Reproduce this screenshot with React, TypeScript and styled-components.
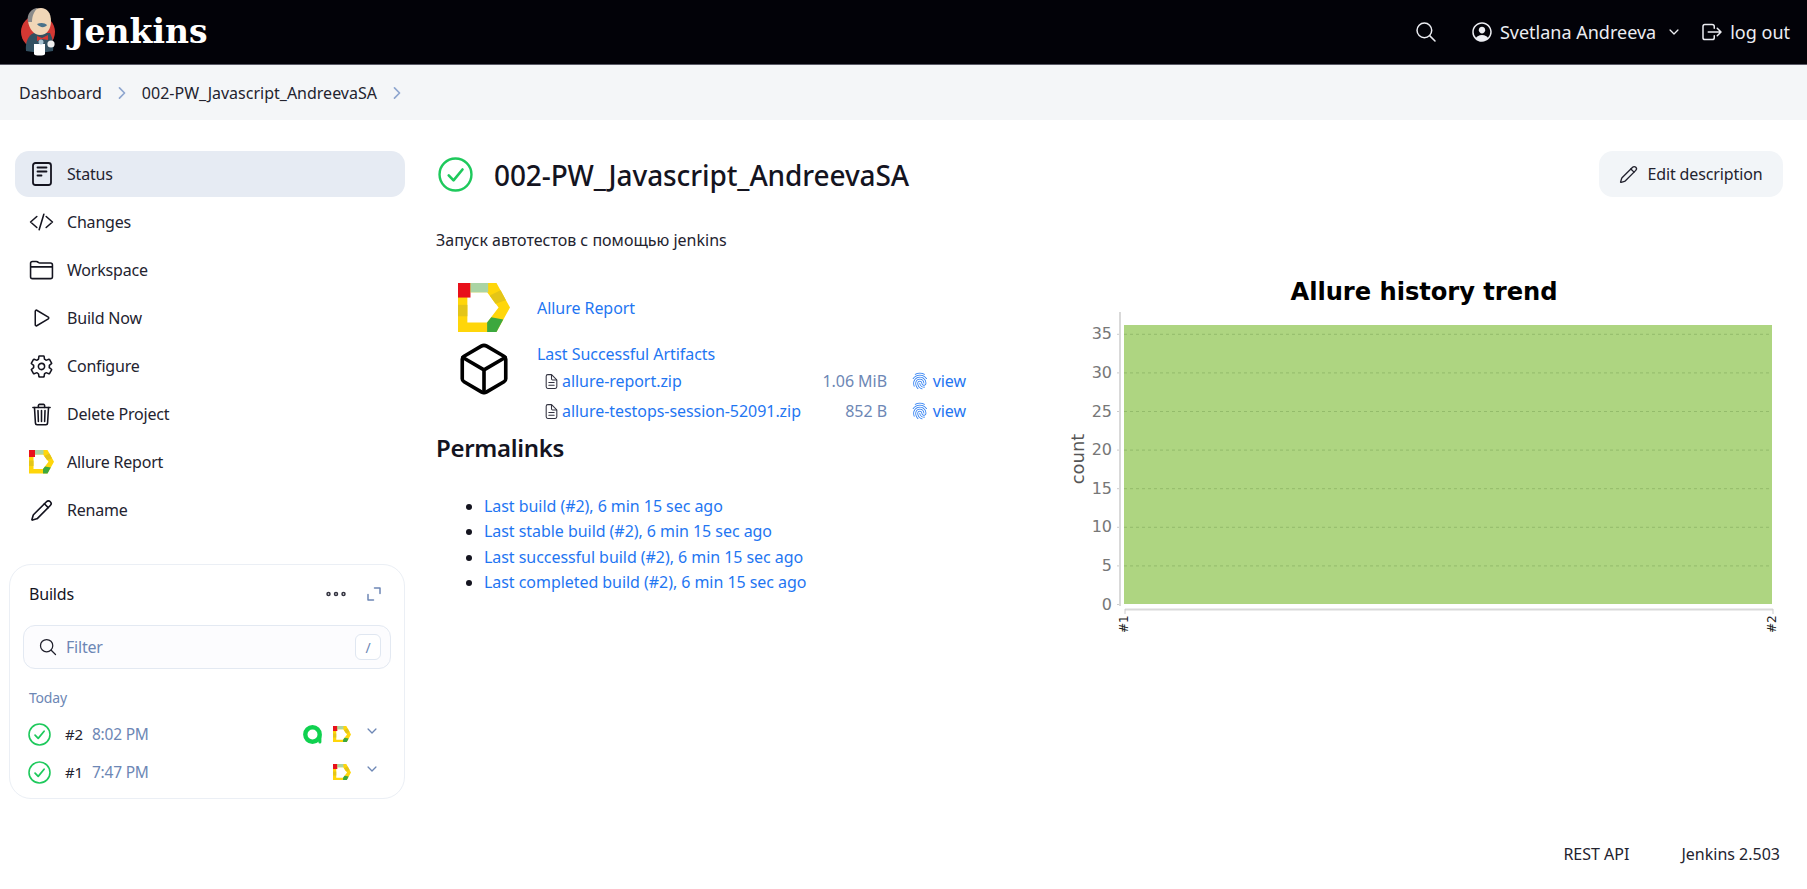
import React from "react";
import styled, { createGlobalStyle } from "styled-components";
import {
  IoCodeSlashOutline,
  IoDocumentTextOutline,
  IoFolderOutline,
  IoPlayOutline,
  IoSettingsOutline,
  IoTrashOutline,
  IoSearchOutline,
  IoPersonCircleOutline,
  IoLogOutOutline,
  IoCubeOutline,
  IoChevronForward,
  IoChevronDown,
  IoEllipsisHorizontalOutline,
  IoFingerPrintOutline,
} from "react-icons/io5";
import { Pencil } from "lucide-react";

const GlobalStyle = createGlobalStyle`
  * { box-sizing: border-box; }
  html, body { margin: 0; padding: 0; background: #ffffff; }
  body {
    font-family: "Noto Sans", "Open Sans", "Liberation Sans", sans-serif;
    font-size: 16px;
    color: #14141f;
  }
`;

const AllureLogo = ({ size }: { size: number }) => (
  <svg width={size} height={(size * 47) / 50} viewBox="0 0 50 47">
    <path
      fillRule="evenodd"
      fill="#ffd60a"
      d="M0 0H37L50 23.5L37 47H0ZM9 9V38H28L39 23.5L28 9Z"
    />
    <rect x="0" y="0" width="12" height="14" fill="#e8101a" />
    <rect x="12" y="0" width="17" height="9" fill="#aad4a4" />
    <path d="M41 7L46 16.5L36 20L30.5 12Z" fill="#e4c518" />
    <rect x="0" y="21" width="9" height="11" fill="#e4c518" />
    <path d="M43.5 35L37 47H28V38L32 33Z" fill="#3ca83e" />
  </svg>
);

const StatusIcon = ({ size }: { size: number }) => (
  <svg width={size} height={size} viewBox="0 0 32 32" fill="none" stroke="#1ec95c" strokeLinecap="round" strokeLinejoin="round">
    <circle cx="16" cy="16" r="14.6" strokeWidth="2.2" />
    <path d="M9.8 16.8l4.4 4.6 8.2-10" strokeWidth="2.4" />
  </svg>
);

const StatusPageIcon = () => (
  <svg width="24" height="24" viewBox="0 0 24 24" fill="none" stroke="#14141f" strokeWidth="1.8" strokeLinecap="round" strokeLinejoin="round">
    <rect x="3" y="1" width="18" height="22" rx="2.5" />
    <path d="M7.5 5.5H16.5M7.5 9.5H16.5M7.5 13.5H11.5" />
  </svg>
);

const TestOpsIcon = () => (
  <svg width="21" height="23" viewBox="0 0 20 23" fill="none">
    <circle cx="10" cy="11.5" r="7.2" stroke="#0fd14f" strokeWidth="4.4" />
    <path d="M17.4 12V19" stroke="#0fd14f" strokeWidth="3" strokeLinecap="round" />
  </svg>
);

const JenkinsLogo = () => (
  <svg width="44" height="50" viewBox="0 0 44 50">
    <circle cx="18" cy="25" r="17" fill="#d33833" />
    <path d="M6 44C5 36 8 28 14 26L30 26C33 32 34 38 33 44L20 46Z" fill="#335061" />
    <path d="M8 14C8 5 14 1 21 1C27 1 31 6 31 14C31 22 27 28 20 28C14 28 9 22 8 14Z" fill="#f0d6b7" />
    <path d="M8 15C6 7 12 1 18 1C14 4 12 9 12 15Z" fill="#8a8a8a" />
    <path d="M17 17C21 15 25 16 27 18C25 21 20 21 17 17Z" fill="#49728b" />
    <path d="M17 29L22 31L28 28L28 33L22 32L17 34Z" fill="#d33833" />
    <path d="M14 37H25V47C25 49 14 49 14 47Z" fill="#ffffff" />
    <circle cx="31" cy="37" r="3.6" fill="#f0f0f0" />
    <circle cx="21" cy="35" r="2.5" fill="#a8c4d4" />
  </svg>
);

const ExpandIcon = () => (
  <svg width="14" height="14" viewBox="0 0 14 14" fill="none" stroke="#6d87b5" strokeWidth="1.5" strokeLinecap="round" strokeLinejoin="round">
    <path d="M7.5 1H13V6.5" />
    <path d="M1 7.5V13H6.5" />
  </svg>
);

const TrendChart = () => {
  const ticks = [0, 5, 10, 15, 20, 25, 30, 35];
  const zeroY = 334.5;
  const step = 38.6;
  return (
    <svg width="740" height="370" viewBox="0 0 740 370">
      <text x="374" y="30" textAnchor="middle" fontFamily="'DejaVu Sans', sans-serif" fontWeight="700" fontSize="24.2" fill="#000000">
        Allure history trend
      </text>
      <rect x="74" y="55" width="648" height="279" fill="#aed581" />
      {ticks.map((t) => {
        const y = zeroY - t * (step / 5);
        return (
          <g key={t}>
            {t > 0 && <line x1="74" x2="722" y1={y} y2={y} stroke="#93bb6b" strokeDasharray="3 3" />}
            <line x1="67" x2="70" y1={y} y2={y} stroke="#cccccc" />
            <text x="62" y={y + 5} textAnchor="end" fontFamily="'DejaVu Sans', sans-serif" fontSize="16" fill="#777777">
              {t}
            </text>
          </g>
        );
      })}
      <line x1="70" x2="70" y1="42" y2="336" stroke="#d9d9d9" strokeWidth="2" />
      <line x1="75" x2="723" y1="339.5" y2="339.5" stroke="#d9d9d9" strokeWidth="2" />
      <line x1="75" x2="75" y1="339" y2="344" stroke="#cccccc" />
      <line x1="723" x2="723" y1="339" y2="344" stroke="#cccccc" />
      <text transform="translate(34 189) rotate(-90)" textAnchor="middle" fontFamily="'DejaVu Sans', sans-serif" fontSize="18" fill="#555555">
        count
      </text>
      <text transform="translate(78 363) rotate(-90)" fontFamily="'DejaVu Sans', sans-serif" fontSize="12" fill="#222222">
        #1
      </text>
      <text transform="translate(726 363) rotate(-90)" fontFamily="'DejaVu Sans', sans-serif" fontSize="12" fill="#222222">
        #2
      </text>
    </svg>
  );
};

const tasks = [
  { label: "Status", icon: <StatusPageIcon />, active: true },
  { label: "Changes", icon: <IoCodeSlashOutline size={26} /> },
  { label: "Workspace", icon: <IoFolderOutline size={26} /> },
  { label: "Build Now", icon: <IoPlayOutline size={24} /> },
  { label: "Configure", icon: <IoSettingsOutline size={25} /> },
  { label: "Delete Project", icon: <IoTrashOutline size={25} /> },
  { label: "Allure Report", icon: <AllureLogo size={25} /> },
  { label: "Rename", icon: <Pencil size={23} strokeWidth={1.7} /> },
];

const artifacts = [
  { name: "allure-report.zip", size: "1.06 MiB" },
  { name: "allure-testops-session-52091.zip", size: "852 B" },
];

const permalinks = [
  "Last build (#2), 6 min 15 sec ago",
  "Last stable build (#2), 6 min 15 sec ago",
  "Last successful build (#2), 6 min 15 sec ago",
  "Last completed build (#2), 6 min 15 sec ago",
];

export default function App() {
  return (
    <Page>
      <GlobalStyle />
      <Header>
        <Brand>
          <JenkinsLogo />
          <BrandName>Jenkins</BrandName>
        </Brand>
        <HeaderActions>
          <SearchButton>
            <IoSearchOutline size={24} />
          </SearchButton>
          <UserButton>
            <IoPersonCircleOutline size={24} />
            <span>Svetlana Andreeva</span>
            <IoChevronDown size={14} />
          </UserButton>
          <LogoutButton>
            <IoLogOutOutline size={24} />
            <span>log out</span>
          </LogoutButton>
        </HeaderActions>
      </Header>

      <Breadcrumbs>
        <span>Dashboard</span>
        <Crumb>
          <IoChevronForward size={18} />
        </Crumb>
        <span>002-PW_Javascript_AndreevaSA</span>
        <Crumb>
          <IoChevronForward size={18} />
        </Crumb>
      </Breadcrumbs>

      <Body>
        <Sidebar>
          <Tasks>
            {tasks.map((t) => (
              <Task key={t.label} $active={t.active}>
                <TaskIcon>{t.icon}</TaskIcon>
                {t.label}
              </Task>
            ))}
          </Tasks>

          <BuildsCard>
            <BuildsHeader>
              <BuildsTitle>Builds</BuildsTitle>
              <BuildsTools>
                <IoEllipsisHorizontalOutline size={24} color="#333340" />
                <ExpandIcon />
              </BuildsTools>
            </BuildsHeader>
            <FilterBox>
              <IoSearchOutline size={20} color="#20202c" />
              <FilterText>Filter</FilterText>
              <SlashKey>/</SlashKey>
            </FilterBox>
            <DayLabel>Today</DayLabel>
            <BuildRow>
              <StatusIcon size={23} />
              <BuildNumber>#2</BuildNumber>
              <BuildTime>8:02 PM</BuildTime>
              <BuildBadges>
                <TestOpsIcon />
                <AllureLogo size={18} />
              </BuildBadges>
              <BuildChevron>
                <IoChevronDown size={14} />
              </BuildChevron>
            </BuildRow>
            <BuildRow>
              <StatusIcon size={23} />
              <BuildNumber>#1</BuildNumber>
              <BuildTime>7:47 PM</BuildTime>
              <BuildBadges>
                <AllureLogo size={18} />
              </BuildBadges>
              <BuildChevron>
                <IoChevronDown size={14} />
              </BuildChevron>
            </BuildRow>
          </BuildsCard>
        </Sidebar>

        <Main>
          <TitleRow>
            <TitleGroup>
              <StatusIcon size={35} />
              <Title>002-PW_Javascript_AndreevaSA</Title>
            </TitleGroup>
            <EditButton>
              <Pencil size={19} strokeWidth={1.7} />
              Edit description
            </EditButton>
          </TitleRow>
          <Description>Запуск автотестов с помощью jenkins</Description>

          <Columns>
            <LeftColumn>
              <AllureRow>
                <AllureLogo size={52} />
                <Link>Allure Report</Link>
              </AllureRow>
              <ArtifactsRow>
                <CubeBox>
                  <IoCubeOutline size={58} color="#000000" />
                </CubeBox>
                <ArtifactsBody>
                  <ArtifactsTitle>Last Successful Artifacts</ArtifactsTitle>
                  {artifacts.map((a) => (
                    <FileRow key={a.name}>
                      <IoDocumentTextOutline size={17} color="#333340" />
                      <FileLink>{a.name}</FileLink>
                      <FileSize>{a.size}</FileSize>
                      <ViewLink>
                        <IoFingerPrintOutline size={20} />
                        view
                      </ViewLink>
                    </FileRow>
                  ))}
                </ArtifactsBody>
              </ArtifactsRow>
              <SectionTitle>Permalinks</SectionTitle>
              <PermalinkList>
                {permalinks.map((p) => (
                  <li key={p}>
                    <Link>{p}</Link>
                  </li>
                ))}
              </PermalinkList>
            </LeftColumn>
            <ChartBox>
              <TrendChart />
            </ChartBox>
          </Columns>
        </Main>
      </Body>

      <Footer>
        <span>REST API</span>
        <span>Jenkins 2.503</span>
      </Footer>
    </Page>
  );
}

const Page = styled.div`
  min-height: 889px;
  display: flex;
  flex-direction: column;
`;

const Header = styled.header`
  height: 65px;
  flex: none;
  display: flex;
  align-items: center;
  justify-content: space-between;
  padding: 0 17px 1px 20px;
  background: #020208;
  border-bottom: 1px solid #5a5a66;
  color: #ecedf2;
`;

const Brand = styled.div`
  display: flex;
  align-items: center;
  gap: 5px;
`;

const BrandName = styled.div`
  font-family: "DejaVu Serif", "Liberation Serif", serif;
  font-weight: 700;
  font-size: 33px;
  color: #ffffff;
`;

const HeaderActions = styled.div`
  display: flex;
  align-items: center;
  font-size: 18px;
`;

const SearchButton = styled.div`
  display: flex;
  margin-right: 32px;
`;

const UserButton = styled.div`
  display: flex;
  align-items: center;
  gap: 6px;
  margin-right: 19px;

  svg:last-child {
    margin-left: 5px;
  }
`;

const LogoutButton = styled.div`
  display: flex;
  align-items: center;
  gap: 6px;
`;

const Breadcrumbs = styled.nav`
  height: 55px;
  flex: none;
  display: flex;
  align-items: center;
  padding-left: 19px;
  background: #f4f6f8;
  color: #23232f;
`;

const Crumb = styled.span`
  display: flex;
  margin: 0 11px;
  color: #8ea6cf;
`;

const Body = styled.div`
  display: flex;
  align-items: flex-start;
  gap: 31px;
  padding: 31px 24px 0 9px;
`;

const Sidebar = styled.aside`
  width: 396px;
  flex: none;
  display: flex;
  flex-direction: column;
  gap: 31px;
  letter-spacing: -0.2px;
`;

const Tasks = styled.div`
  display: flex;
  flex-direction: column;
  gap: 2px;
  margin-left: 6px;
`;

const Task = styled.div<{ $active?: boolean }>`
  height: 46px;
  display: flex;
  align-items: center;
  gap: 13px;
  padding-left: 14px;
  border-radius: 14px;
  color: #23232f;
  background: ${(p) => (p.$active ? "#e6ebf3" : "transparent")};
`;

const TaskIcon = styled.span`
  width: 25px;
  display: flex;
  justify-content: center;
  color: #14141f;
`;

const BuildsCard = styled.section`
  height: 235px;
  border: 1px solid #ebeff5;
  border-radius: 22px;
  padding: 0 13px;
`;

const BuildsHeader = styled.div`
  height: 60px;
  display: flex;
  align-items: center;
  justify-content: space-between;
  padding: 0 10px 3px 6px;
`;

const BuildsTitle = styled.div`
  color: #14141f;
`;

const BuildsTools = styled.div`
  display: flex;
  align-items: center;
  gap: 19px;
`;

const FilterBox = styled.div`
  height: 44px;
  display: flex;
  align-items: center;
  gap: 8px;
  padding: 0 9px 0 14px;
  border: 1.5px solid #e3e9f2;
  border-radius: 12px;
  background: #fcfcfe;
`;

const FilterText = styled.span`
  flex: 1;
  color: #6d87b5;
`;

const SlashKey = styled.span`
  width: 26px;
  height: 26px;
  display: flex;
  align-items: center;
  justify-content: center;
  border: 1.5px solid #e0e7f1;
  border-radius: 6px;
  background: #ffffff;
  font-size: 14px;
  color: #6d87b5;
`;

const DayLabel = styled.div`
  margin: 19px 0 7px 6px;
  font-size: 14px;
  line-height: 20px;
  color: #6d87b5;
`;

const BuildRow = styled.div`
  height: 38px;
  display: flex;
  align-items: center;
  padding-left: 5px;
  font-size: 15px;
`;

const BuildNumber = styled.span`
  margin-left: 14px;
  color: #23232f;
`;

const BuildTime = styled.span`
  margin-left: 9px;
  font-size: 15.5px;
  color: #6d87b5;
`;

const BuildBadges = styled.div`
  margin-left: auto;
  display: flex;
  align-items: center;
  gap: 10px;
`;

const BuildChevron = styled.span`
  display: flex;
  margin: -6px 12px 0 14px;
  color: #6d87b5;
`;

const Main = styled.main`
  flex: 1;
  min-width: 0;
  letter-spacing: -0.05px;
`;

const TitleRow = styled.div`
  height: 46px;
  display: flex;
  align-items: center;
  justify-content: space-between;
`;

const TitleGroup = styled.div`
  display: flex;
  align-items: center;
  gap: 21px;
  padding-left: 2px;
`;

const Title = styled.h1`
  margin: 0 0 -2px;
  font-size: 28px;
  font-weight: 500;
  letter-spacing: -0.1px;
  color: #14141f;
`;

const EditButton = styled.div`
  width: 184px;
  height: 46px;
  display: flex;
  align-items: center;
  justify-content: center;
  gap: 9px;
  border-radius: 14px;
  background: #f2f5f8;
  color: #23232f;
  letter-spacing: -0.12px;
`;

const Description = styled.p`
  margin: 31px 0 0;
  line-height: 24px;
  letter-spacing: 0;
  color: #23232f;
`;

const Columns = styled.div`
  display: flex;
  align-items: flex-start;
  margin-top: 18px;
`;

const LeftColumn = styled.div`
  width: 614px;
  flex: none;
`;

const ChartBox = styled.div`
  display: flex;
`;

const Link = styled.a`
  color: #1f76f2;
`;

const AllureRow = styled.div`
  height: 47px;
  margin-top: 14px;
  display: flex;
  align-items: center;
  gap: 27px;
  padding-left: 22px;
`;

const ArtifactsRow = styled.div`
  display: flex;
  margin-top: 11px;
  padding-left: 19px;
`;

const CubeBox = styled.div`
  width: 82px;
  display: flex;
  align-items: flex-start;
  margin-top: -2px;
`;

const ArtifactsBody = styled.div`
  width: 429px;
`;

const ArtifactsTitle = styled(Link)`
  display: block;
  line-height: 24px;
`;

const FileRow = styled.div`
  height: 30px;
  display: flex;
  align-items: center;
  padding-left: 6px;
  color: #1f76f2;
`;

const FileLink = styled(Link)`
  margin-left: 2px;
`;

const FileSize = styled.span`
  margin-left: auto;
  color: #6d87b5;
`;

const ViewLink = styled(Link)`
  width: 79px;
  display: flex;
  align-items: center;
  gap: 4px;
  padding-left: 24px;
`;

const SectionTitle = styled.h2`
  margin: 4px 0 0;
  height: 36px;
  line-height: 36px;
  font-size: 24px;
  font-weight: 600;
  letter-spacing: -0.3px;
  color: #14141f;
`;

const PermalinkList = styled.ul`
  margin: 28px 0 0;
  padding-left: 48px;
  line-height: 25.4px;
`;

const Footer = styled.footer`
  margin-top: auto;
  height: 60px;
  display: flex;
  justify-content: flex-end;
  gap: 52px;
  padding: 13px 27px 0 0;
  line-height: 24px;
  color: #23232f;
`;
